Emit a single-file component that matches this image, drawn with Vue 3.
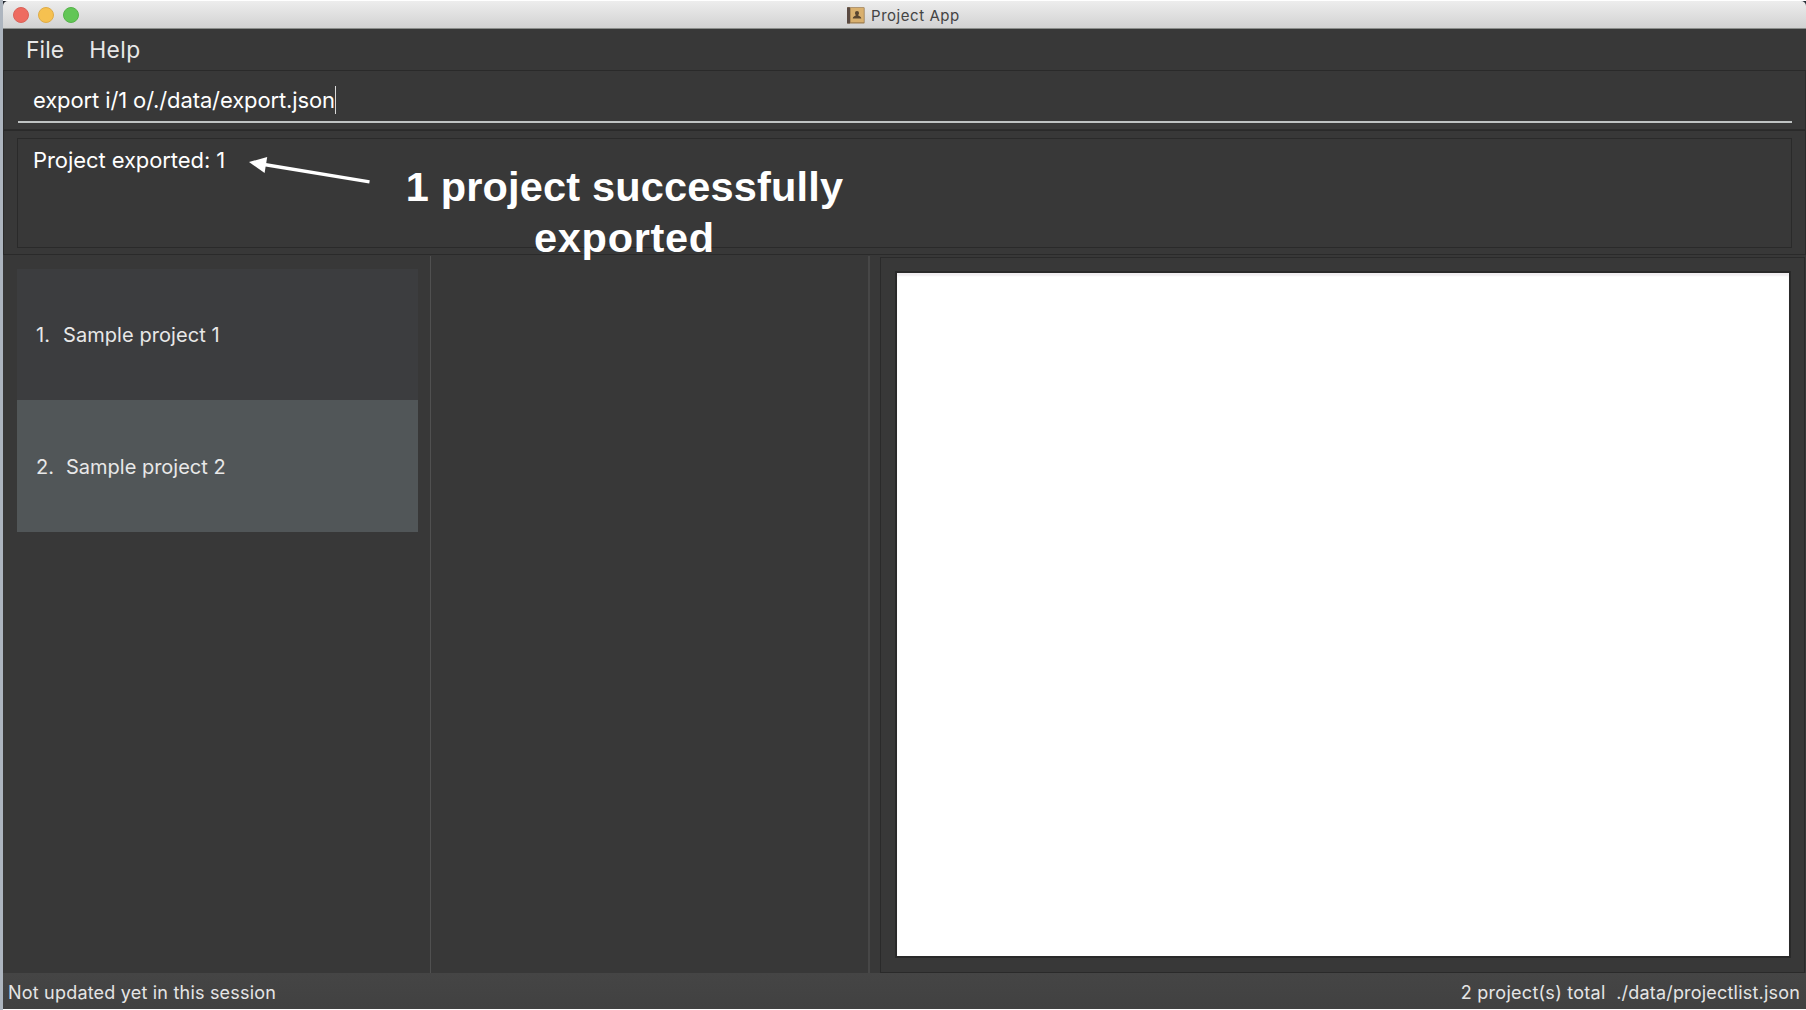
<script setup>
const menus = ['File', 'Help']
const projects = ['Sample project 1', 'Sample project 2']
</script>

<template>
  <div class="desktop">
    <div class="window">
      <header class="titlebar">
        <div class="lights">
          <i class="light red"></i><i class="light yellow"></i><i class="light green"></i>
        </div>
        <div class="title">
          <svg width="18" height="17" viewBox="0 0 18 17">
            <rect x="0" y="0.3" width="17.6" height="16.2" rx="0.8" fill="#9a7a4c" />
            <rect x="0" y="0.3" width="3" height="16.2" rx="0.6" fill="#5a4a42" />
            <rect x="3.6" y="0.9" width="13.2" height="14.4" fill="#d9b06e" />
            <path d="M10 4a2 2 0 0 1 2 2.1c0 1-.6 1.500-.8 2.200.2.9 3 .8 3.100 3.300H5.800c.1-2.500 2.800-2.400 3-3.300C8.600 7.600 8 7.100 8 6.100A2 2 0 0 1 10 4z" fill="#5a4630" />
          </svg>
          <span class="app-name">Project App</span>
        </div>
      </header>
      <nav class="menubar">
        <span v-for="m in menus" :key="m" :class="m.toLowerCase()">{{ m }}</span>
      </nav>
      <section class="command">
        <div class="field"><span class="command-text">export i/1 o/./data/export.json</span><i class="caret"></i></div>
      </section>
      <section class="result">
        <div class="result-box"><span class="result-text">Project exported: 1</span></div>
      </section>
      <main class="content">
        <div class="list">
          <div v-for="(p, i) in projects" :key="p" class="card" :class="{ alt: i % 2 }">
            <span class="num">{{ i + 1 }}.</span><span class="name">{{ p }}</span>
          </div>
        </div>
        <div class="divider"></div>
        <div class="middle"></div>
        <div class="divider wide"></div>
        <div class="browser"><div class="page"></div></div>
      </main>
      <footer class="status">
        <span class="sync">Not updated yet in this session</span>
        <span class="total">2 project(s) total</span>
        <span class="path">./data/projectlist.json</span>
      </footer>
    </div>
    <svg class="arrow" width="130" height="40" viewBox="0 0 130 40">
      <path d="M13 8.500 124.500 26.800" stroke="#fff" stroke-width="3.300" fill="none" />
      <path d="M4 7 22.200 2 19.600 18z" fill="#fff" />
    </svg>
    <div class="note"><div class="n1">1 project successfully</div><div class="n2">exported</div></div>
  </div>
</template>

<style>
body { overflow: hidden; background: #fff; }
</style>

<style scoped>
* { box-sizing: border-box; }
.desktop {
  position: relative;
  width: 1806px;
  height: 1010px;
  padding: 1px 0 1px 3px;
  background: linear-gradient(90deg, #adb5bf 3px, #fff 3px);
  font-family: Inter, "Liberation Sans", sans-serif;
  overflow: hidden;
  white-space: nowrap;
}
.window { display: flex; flex-direction: column; height: 1008px; background: linear-gradient(90deg, #20242c 50%, #252d35 50%); }
.titlebar {
  height: 28px;
  display: flex;
  align-items: center;
  background: linear-gradient(#ededed, #d2d2d2);
  border-bottom: 1px solid #8b8e8b;
  border-radius: 5px 5px 0 0;
}
.lights { display: flex; gap: 9px; padding-left: 9.500px; width: 844px; }
.light { width: 16px; height: 16px; border-radius: 50%; border: 1px solid; }
.red { background: #ee6b60; border-color: #d9635a; }
.yellow { background: #f6c150; border-color: #dfac48; }
.green { background: #62c656; border-color: #56b24a; }
.title { display: flex; align-items: center; gap: 6px; padding-top: 1px; color: #444; font-size: 15px; letter-spacing: 0.550px; }
.menubar {
  height: 42px;
  display: flex;
  gap: 25px;
  padding-left: 23px;
  line-height: 41px;
  font-size: 22.800px;
  letter-spacing: 0.100px;
  color: #e8e8e8;
  background: #383838;
  border-bottom: 1px solid #2a2a2a;
}
.help { letter-spacing: 0.450px; }
.command { height: 59px; padding: 11px 13px 0 14px; background: #383838; border: solid #2c2c2c; border-width: 0 1px 1px; }
.field { height: 41px; display: flex; align-items: center; padding: 0 0 4px 15px; border-bottom: 2px solid #bfc3c3; color: #fff; font-size: 22px; letter-spacing: -0.120px; }
.caret { width: 1px; height: 28px; background: #d8d8d8; }
.result { height: 125px; padding: 7px 13px 7px 13px; background: #383838; border: 1px solid #2a2a2a; }
.result-box { height: 110px; border: 1px solid #2a2a2a; padding: 7px 15px; font-size: 22px; line-height: 28px; color: #fff; letter-spacing: -0.080px; }
.content { flex: 1; display: flex; background: #383838; }
.list { width: 427px; padding: 14px 12.500px 0 14px; }
.card { height: 131px; padding: 1px 0 0 19px; display: flex; align-items: center; background: #3c3d3f; color: #e8e8e8; font-size: 20px; letter-spacing: 0.060px; }
.card.alt { height: 132px; padding-top: 2px; background: #515658; letter-spacing: 0; }
.num { margin-right: 13px; }
.alt .num { margin-right: 12px; }
.divider { width: 1px; margin-top: 1px; background: #505050; }
.divider.wide { width: 2px; background: #474747; }
.middle { width: 437px; }
.browser { flex: 1; margin: 2px 1px 0 10px; border: 1px solid #2a2a2a; padding: 13px 13px 0 14px; }
.page { height: 687px; border: 2px solid #292929; background: #fff; box-shadow: inset 0 3px 2px #f1eef1; }
.status { height: 36px; padding: 3px 6px 0 5px; display: flex; align-items: center; background: linear-gradient(#454545, #414141); color: #e5e5e5; font-size: 18px; letter-spacing: 0.200px; }
.total { margin-left: auto; margin-right: 10.500px; letter-spacing: 0.270px; }
.arrow { position: absolute; left: 245px; top: 155px; }
.note { position: absolute; left: 374.500px; top: 161px; width: 500px; text-align: center; color: #fff; font: bold 41.500px/51px "Liberation Sans", Arial, sans-serif; }
.n1 { letter-spacing: 0.180px; }
.n2 { letter-spacing: 0.700px; }
</style>
